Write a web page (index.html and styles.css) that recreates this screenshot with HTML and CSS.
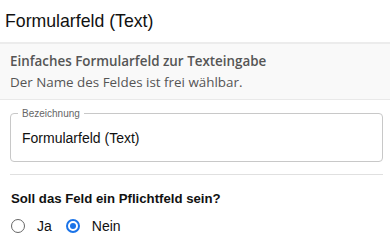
FILE: index.html
```html
<!DOCTYPE html>
<html lang="de">
<head>
<meta charset="utf-8">
<link rel="stylesheet" href="styles.css">
</head>
<body>
<div class="header">Formularfeld (Text)</div>
<div class="desc">
  <div class="desc-title">Einfaches Formularfeld zur Texteingabe</div>
  <div class="desc-text">Der Name des Feldes ist frei wählbar.</div>
</div>
<div class="content">
  <fieldset class="field">
    <legend class="field-label">Bezeichnung</legend>
    <input class="field-input" type="text" value="Formularfeld (Text)">
  </fieldset>
  <div class="sep"></div>
  <div class="question">Soll das Feld ein Pflichtfeld sein?</div>
  <div class="radios">
    <label class="radio"><input type="radio" name="req" value="ja"><span>Ja</span></label>
    <label class="radio"><input type="radio" name="req" value="nein" checked><span>Nein</span></label>
  </div>
</div>
</body>
</html>
```

FILE: styles.css
```css
html, body {
  margin: 0;
  padding: 0;
  background: #fff;
}
body {
  font-family: "Liberation Sans", Arial, sans-serif;
  color: #111;
}
.header {
  height: 42px;
  line-height: 43px;
  padding-left: 5px;
  font-size: 17.7px;
  color: #111;
  border-bottom: 2px solid #ececec;
}
.desc {
  background: #f9f9f9;
  border-bottom: 1px solid #e9e9e9;
  padding: 7px 10px 6px 10px;
  font-family: "Open Sans", sans-serif;
  font-size: 13.4px;
  line-height: 21px;
  color: #555;
}
.desc-title {
  font-weight: 600;
}
.content {
  padding: 0 7px 0 10px;
}
.field {
  margin: 8px 0 0 0;
  padding: 0 11px 14px 11px;
  border: 1px solid #c8c8c8;
  border-radius: 4px;
  min-width: 0;
}
.field-label {
  padding: 0 4px;
  margin-left: -4px;
  font-size: 10px;
  color: #666;
}
.field-input {
  display: block;
  width: 100%;
  box-sizing: border-box;
  border: 0;
  outline: none;
  padding: 0;
  margin: 10px 0 0 0;
  font-family: "Liberation Sans", Arial, sans-serif;
  font-size: 14px;
  line-height: 18px;
  color: #111;
  background: transparent;
}
.sep {
  height: 1px;
  background: #e0e0e0;
  margin-top: 12px;
}
.question {
  margin-top: 16px;
  padding-left: 1px;
  font-weight: bold;
  font-size: 13.2px;
  line-height: 16px;
  color: #111;
}
.radios {
  display: flex;
  gap: 13px;
  margin-top: 11px;
}
.radio {
  display: flex;
  align-items: center;
  font-size: 14px;
  line-height: 16px;
  color: #111;
}
.radio input {
  appearance: none;
  -webkit-appearance: none;
  box-sizing: border-box;
  width: 14px;
  height: 14px;
  margin: 0 12px 0 1px;
  border: 1.5px solid #666;
  border-radius: 50%;
  background: #fff;
  position: relative;
}
.radio input:checked {
  border: 2px solid #1a73e8;
}
.radio input:checked::after {
  content: "";
  position: absolute;
  left: 2px;
  top: 2px;
  width: 6px;
  height: 6px;
  border-radius: 50%;
  background: #1a73e8;
}
```
